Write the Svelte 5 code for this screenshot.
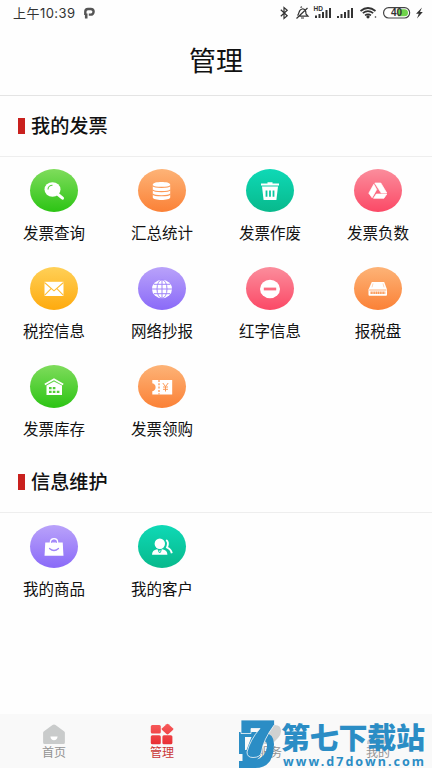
<script lang="ts">
    const sections = [
        {
            title: '我的发票',
            items: [
                { name: '发票查询', icon: 'search', color: 'green' },
                { name: '汇总统计', icon: 'stack', color: 'orange' },
                { name: '发票作废', icon: 'trash', color: 'teal' },
                { name: '发票负数', icon: 'drive', color: 'pink' },
                { name: '税控信息', icon: 'mail', color: 'yellow' },
                { name: '网络抄报', icon: 'globe', color: 'purple' },
                { name: '红字信息', icon: 'minus', color: 'pink' },
                { name: '报税盘', icon: 'disk', color: 'orange' },
                { name: '发票库存', icon: 'house', color: 'green' },
                { name: '发票领购', icon: 'ticket', color: 'orange' }
            ]
        },
        {
            title: '信息维护',
            items: [
                { name: '我的商品', icon: 'bag', color: 'purple' },
                { name: '我的客户', icon: 'users', color: 'teal' }
            ]
        }
    ];

    const tabs = [
        { name: '首页', icon: 'home' },
        { name: '管理', icon: 'grid' },
        { name: '服务', icon: 'service' },
        { name: '我的', icon: 'me' }
    ];

    let current = $state('管理');
</script>

<div class="page">
    <div class="status">
        <span class="time">上午10:39</span>
        <svg class="p-logo" width="12" height="12" viewBox="0 0 12 12">
            <path d="M1.300 8V4.800Q1.300 2 4 2h2.800a2.800 2.800 0 0 1 0 5.600H4.800" fill="none" stroke="#555" stroke-width="2.400" />
            <path d="M2.200 6.500v5" stroke="#555" stroke-width="2.600" />
        </svg>
        <svg class="signals" width="148" height="18" viewBox="278 4 148 18">
            <g fill="none" stroke="#333" stroke-width="1.2">
                <path d="M280.8 9.8l6.4 6-3.2 2.7V7.500l3.200 2.700-6.400 6" />
                <path d="M297.500 15.500c2-2 1-6 4.500-6.500 3-.5 4 2 4 5l2 2.200h-9.500M301 18h3M296.500 18.500l11-10.500M300.500 7.500l1.500-.8" />
            </g>
            <text x="313.500" y="11" class="hd">HD</text>
            <g fill="#333">
                <path d="M315 15.500h2v2.500h-2zM318.500 14h2v4h-2zM322 12h2v6h-2zM325.500 10h2v8h-2zM329 8h2v10h-2z" />
                <path d="M337 16h2v2h-2zM340.500 14h2v4h-2zM344 12h2v6h-2zM347.500 10h2v8h-2zM351 8h2v10h-2z" />
                <path d="M422 7.500l-6 6.200h2.800l-1.800 4.800 5.800-6.500h-2.800z" />
                <circle cx="368" cy="16.800" r="1.600" />
                <circle cx="375.500" cy="17" r=".8" />
            </g>
            <g fill="none" stroke="#333" stroke-width="1.700">
                <path d="M360.500 11q7.500-6 15 0M362.800 13.200q5.200-4 10.400 0M365 15.400q3-2 6 0" />
            </g>
            <rect x="383.600" y="7.600" width="26" height="10.400" rx="5" fill="#fff" stroke="#444" stroke-width="1.200" />
            <path d="M398 9.300h6.500a3.500 3.500 0 0 1 0 7H398z" fill="#6fd34a" />
            <text x="391" y="16.300" class="battery">40</text>
        </svg>
    </div>

    <header>管理</header>

    {#each sections as section}
        <section>
            <h2><i></i><span>{section.title}</span></h2>
            <div class="items">
                {#each section.items as item}
                    <div class="item">
                        <div class="bubble {item.color}">
                            <svg width="22" height="20" viewBox="0 0 22 20">
                                {#if item.icon === 'search'}
                                    <ellipse cx="9.500" cy="8.500" rx="8" ry="7.300" fill="#fff" />
                                    <path d="M14.500 13l5 4.200" stroke="#fff" stroke-width="3" stroke-linecap="round" />
                                    <path d="M5 8.500c0-2.500 2-4.300 4.500-4.300" class="cut" stroke-width="1.100" />
                                {:else if item.icon === 'stack'}
                                    <path d="M1.800 3.500c0-3.300 17.400-3.300 17.400 0v13c0 3.300-17.400 3.300-17.400 0z" fill="#fff" />
                                    <path d="M1.500 4.600c2 2.300 16 2.300 18 0M1.500 8.800c2 2.300 16 2.300 18 0M1.500 13c2 2.300 16 2.300 18 0" class="cut" stroke-width="1.200" />
                                {:else if item.icon === 'trash'}
                                    <path d="M2 2.500h6.500V1.200h5v1.300H20v2H2zM3 5.500h16L17.400 19H4.600z" fill="#fff" />
                                    <path d="M7.500 9.500v6.300M11 9.500v6.300M14.500 9.500v6.300" class="cut" stroke-width="1.800" />
                                {:else if item.icon === 'drive'}
                                    <path d="M7.800 2h6l6 10h-5.600zM6.800 3.300l2.900 5.200-4.600 8.200-3.300-4.500zM9.300 13h10.500l-2.900 4.300H6.500z" fill="#fff" stroke="#fff" stroke-width=".7" stroke-linejoin="round" />
                                {:else if item.icon === 'mail'}
                                    <path d="M1.500 2.800h19V17h-19z" fill="#fff" />
                                    <path d="M1.500 3.500L11 11.800l9.500-8.300M1.500 16.300l6.600-6.600M20.500 16.300l-6.600-6.600" class="cut" stroke-width="1.100" />
                                {:else if item.icon === 'globe'}
                                    <ellipse cx="11" cy="10" rx="10" ry="9.300" fill="#fff" />
                                    <path d="M11 0v20M1 10h20M3 5.300h16M3 14.700h16" class="cut" />
                                    <ellipse cx="11" cy="10" rx="5" ry="9.300" class="cut" />
                                {:else if item.icon === 'minus'}
                                    <ellipse cx="11" cy="10" rx="10" ry="9.200" fill="#fff" />
                                    <path d="M4.800 10h12.400" class="cut" stroke-width="2.800" />
                                {:else if item.icon === 'disk'}
                                    <path d="M4.800 3h12.400l2.800 7.500v5.300q0 1-1 1H2.500q-1 0-1-1v-5.300z" fill="#fff" />
                                    <path d="M2.200 11h17.200" class="cut" stroke-width=".8" />
                                    <path d="M3.500 13.700h14.800" class="cut" stroke-width="2.400" stroke-dasharray="1.400 .4" />
                                    <path d="M6 4.500l-1 3.800M16 4.500l1 3.800" class="cut" stroke-width=".4" />
                                {:else if item.icon === 'house'}
                                    <path d="M1.800 7.500L11 2.200l9.200 5.300" fill="none" stroke="#fff" stroke-width="1.700" />
                                    <path d="M3.500 8.500L11 4.500l8 4v9.500H3.500z" fill="#fff" />
                                    <path d="M6 10h2.600v2.300H6zM9.800 10h2.600v2.300H9.800zM6 13.700h2.600V16H6zM9.800 13.700h2.600V16H9.800zM13.800 13.700h2.600V16h-2.600z" class="hole" />
                                {:else if item.icon === 'ticket'}
                                    <path d="M1.300 3h19.900v14.500H1.300v-3.200q3.300-.8 3.300-4t-3.300-4z" fill="#fff" />
                                    <path d="M8 3v14.500" class="cut" stroke-width="1.300" stroke-dasharray="2 1.300" />
                                    <path d="M11.800 6l2.700 3.600L17.200 6M14.500 9.500v5M12 10h5M12 12.300h5" class="cut" stroke-width="1" />
                                {:else if item.icon === 'bag'}
                                    <path d="M2.300 5.500h17.400L20.500 18.800h-19z" fill="#fff" />
                                    <path d="M7.500 7V5q0-3.200 3.500-3.200T14.500 5v2" fill="none" stroke="#fff" stroke-width="1.500" />
                                    <path d="M6.500 11.500q4.500 4 9 0" class="cut" stroke-width="1.200" stroke-linecap="round" />
                                    <path d="M8.500 6V5q0-2 2.500-2t2.500 2v1" class="cut" stroke-width=".7" />
                                {:else}
                                    <circle cx="8.800" cy="6.800" r="5.200" fill="#fff" />
                                    <path d="M1 17.800q0-4.800 5-5.600l2.700 1.600 2.700-1.600q5 .8 5 5.600z" fill="#fff" />
                                    <path d="M7.300 13l.7 2.400h1.400l.8-2.400" class="cut" stroke-width=".9" />
                                    <path d="M15.200 3q3 2 .8 7.500 4 1.700 4.800 5.700" fill="none" stroke="#fff" stroke-width="1.900" />
                                {/if}
                            </svg>
                        </div>
                        <span>{item.name}</span>
                    </div>
                {/each}
            </div>
        </section>
    {/each}

    <nav>
        {#each tabs as tab}
            <button type="button" class:active={tab.name === current} onclick={() => (current = tab.name)}>
                <svg width="24" height="22" viewBox="0 0 24 22">
                    {#if tab.icon === 'home'}
                        <path d="M2 8.300L10.500 2q1.500-1 3 0L22 8.300q.9.600.9 1.500v9.700q0 1.500-1.500 1.500H2.600q-1.500 0-1.500-1.500V9.800q0-.9.900-1.500z" fill="#c9cbcb" />
                        <path d="M8.400 13.500h7.200q-.5 3.800-3.600 3.800t-3.600-3.800z" fill="#fff" />
                    {:else if tab.icon === 'grid'}
                        <defs>
                            <linearGradient id="tabRed" x1="0" y1="0" x2="0" y2="22" gradientUnits="userSpaceOnUse">
                                <stop offset="0" stop-color="#f85c5c" />
                                <stop offset="1" stop-color="#e82e33" />
                            </linearGradient>
                        </defs>
                        <g fill="url(#tabRed)">
                            <rect x=".8" y="2" width="10" height="8.500" rx="1.500" />
                            <rect x=".8" y="12.300" width="10" height="8.900" rx="1.500" />
                            <rect x="12.400" y="12.300" width="10" height="8.900" rx="1.500" />
                            <path d="M16.500 1.200q1-.9 2 0l4.400 4q.9.900 0 1.800l-4.400 4q-1 .9-2 0l-4.400-4q-.9-.9 0-1.800z" />
                        </g>
                    {:else if tab.icon === 'service'}
                        <path d="M3 13L9 5q3-3 8-3 6 0 6 6 0 4-3 7l-6 6H5z" fill="#cfd1d1" />
                    {:else}
                        <circle cx="12" cy="6" r="5" fill="#c9cbcb" />
                        <path d="M1 21q0-8 11-8t11 8z" fill="#c9cbcb" />
                    {/if}
                </svg>
                <span>{tab.name}</span>
            </button>
        {/each}
    </nav>

    <svg class="watermark" width="196" height="54" viewBox="236 714 196 54">
        <g fill="#2b8dc5" fill-rule="evenodd">
            <path d="M239 732h24q11 1.500 11 12 0 24-19 24h-16v-7h3.500v-7H239zM245 737v13h1.500l5-13zM264.500 741q-2.500 5-3 11-.5 5-4.500 7.500 9-3 10-13 .3-4.500-2.500-5.500z" />
            <path d="M241 720h33.500v4.500Q263 740 261.500 752q-1 5.500-8.500 5.500-6 0-6-5.500Q250 740 260 728.500h-9v5h-10z" stroke="#f9f9f9" stroke-width=".8" />
        </g>
        <text x="281" y="748.500" class="mark-name" textLength="144">第七下载站</text>
        <text x="283" y="765.800" class="mark-url" textLength="141">www.d7down.com</text>
    </svg>
</div>

<style>
    :global(body) {
        margin: 0;
        background: #fff;
    }

    .page {
        position: relative;
        display: flex;
        flex-direction: column;
        width: 432px;
        height: 768px;
        overflow: hidden;
        background: #fefefe;
        color: #111;
        font-family: "Noto Sans CJK SC", sans-serif;
    }

    .status {
        display: flex;
        align-items: center;
        height: 26px;
        padding: 0 6px 0 13px;
        font-size: 13px;
        color: #333;
    }

    .time {
        width: 64px;
        padding-bottom: 2px;
        font-family: Inter, "Noto Sans CJK SC", sans-serif;
        letter-spacing: 0.45px;
        white-space: nowrap;
    }

    .p-logo {
        margin-left: 7px;
    }

    .signals {
        margin-left: auto;
    }

    .hd {
        font: bold 6.5px "Liberation Sans", sans-serif;
        fill: #333;
    }

    .battery {
        font: bold 10px "Liberation Sans", sans-serif;
        fill: #333;
    }

    header {
        height: 69px;
        line-height: 68px;
        text-align: center;
        font-size: 27px;
        border-bottom: 1px solid #e4e4e4;
    }

    section {
        padding-bottom: 12px;
    }

    h2 {
        display: flex;
        align-items: center;
        height: 60px;
        margin: 0;
        padding-left: 18px;
        font-size: 19.2px;
        font-weight: 500;
        border-bottom: 1px solid #eee;
    }

    h2 i {
        width: 7px;
        height: 16px;
        margin-right: 6px;
        background: #c9211e;
    }

    h2 span {
        padding-bottom: 2px;
    }

    .items {
        display: grid;
        grid-template-columns: repeat(4, 1fr);
        row-gap: 23px;
        padding-top: 12px;
    }

    .item {
        display: flex;
        flex-direction: column;
        align-items: center;
        height: 75px;
        font-size: 15.5px;
    }

    .item span {
        margin-top: 9px;
        line-height: 22px;
    }

    .bubble {
        display: flex;
        align-items: center;
        justify-content: center;
        width: 48px;
        height: 43px;
        border-radius: 50%;
        background: linear-gradient(var(--from), var(--to));
    }

    .green { --from: #7fdc5c; --to: #2cc414; --mid: #55cf38; }
    .orange { --from: #fdb377; --to: #fb8136; --mid: #fc9a57; }
    .teal { --from: #0ed9b6; --to: #08b98c; --mid: #0bc9a1; }
    .pink { --from: #fb8d9c; --to: #fb4966; --mid: #fb6b81; }
    .yellow { --from: #ffd057; --to: #feaa0e; --mid: #febd33; }
    .purple { --from: #b9a2fa; --to: #8a6af8; --mid: #a186f9; }

    .cut {
        fill: none;
        stroke: var(--mid);
    }

    .hole {
        fill: var(--mid);
    }

    nav {
        display: flex;
        height: 54px;
        margin-top: auto;
        background: #f9f9f9;
    }

    nav button {
        display: flex;
        flex: 1;
        flex-direction: column;
        align-items: center;
        padding: 9px 0 0;
        border: 0;
        background: none;
        color: #929292;
        font-family: inherit;
        font-size: 12px;
    }

    nav button span {
        line-height: 13px;
    }

    nav .active {
        color: #c93535;
    }

    .watermark {
        position: absolute;
        right: 0;
        bottom: 0;
        pointer-events: none;
    }

    .mark-name {
        font: 900 29px "Noto Sans CJK SC", sans-serif;
        fill: #2b8dc5;
    }

    .mark-url {
        font: bold 12.5px "Noto Sans", sans-serif;
        fill: #2b8dc5;
    }
</style>
